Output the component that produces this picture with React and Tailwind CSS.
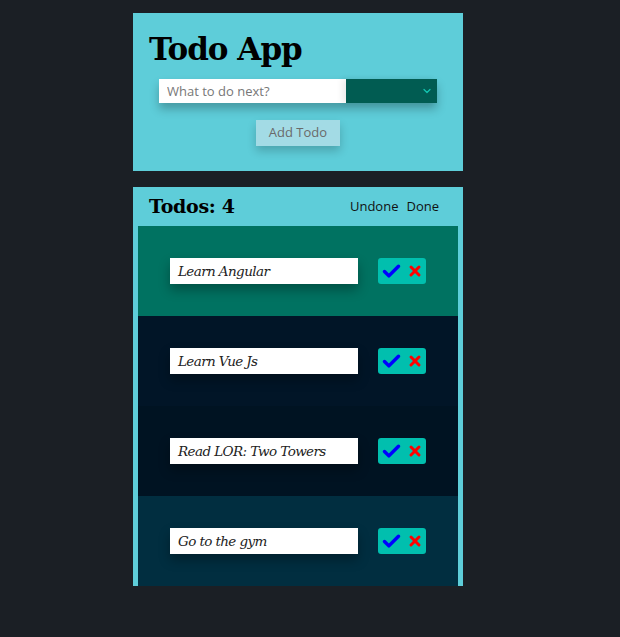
import { Check, X, ChevronDown } from 'lucide-react'

const todos = [
  { text: 'Learn Angular', bg: 'bg-[#007261]' },
  { text: 'Learn Vue Js', bg: 'bg-[#011527]' },
  { text: 'Read LOR: Two Towers', bg: 'bg-[#001322]' },
  { text: 'Go to the gym', bg: 'bg-[#012e40]' },
]

export default function App() {
  return (
    <div className="min-h-[637px] bg-[#1b1f25] flex flex-col items-center pt-[13px] pr-[24px]">
      {/* new todo card */}
      <div className="w-[330px] h-[158px] bg-[#5ecdd9] pt-[16px] px-4">
        <h1 className="text-[31px] leading-[40px] font-bold text-black font-['DejaVu_Serif',serif] tracking-[-1px]">
          Todo App
        </h1>
        <div className="mt-[10px] ml-[10px] flex w-[278px] h-[24px] shadow-[0_6px_10px_rgba(0,0,0,0.25)]">
          <input
            placeholder="What to do next?"
            className="w-[187px] h-full bg-white px-2 text-[13px] text-gray-700 placeholder:text-[#777] font-['Open_Sans',sans-serif] outline-none"
          />
          <div className="flex-1 bg-[#015c52] flex items-center justify-end pr-[4px] shadow-[-4px_0_6px_rgba(0,0,0,0.08)]">
            <ChevronDown size={12} strokeWidth={2.5} className="text-[#14c4b0]" />
          </div>
        </div>
        <div className="flex justify-center mt-[17px]">
          <button className="w-[84px] h-[26px] bg-[#a3dbe5] text-[#6a6a6a] text-[13px] font-['Open_Sans',sans-serif] shadow-[0_5px_10px_rgba(0,0,0,0.2)]">
            Add Todo
          </button>
        </div>
      </div>

      {/* list card */}
      <div className="mt-[16px] w-[330px] bg-[#5ecdd9] px-[5px]">
        <div className="h-[39px] flex items-center justify-between pl-[11px] pr-[19px]">
          <h2 className="text-[19px] font-bold text-black font-['DejaVu_Serif',serif] tracking-[-0.3px]">Todos: 4</h2>
          <div className="flex gap-[8px] text-[13px] text-[#111] font-['Open_Sans',sans-serif]">
            <span>Undone</span>
            <span>Done</span>
          </div>
        </div>
        <ul>
          {todos.map(t => (
            <li key={t.text} className={`${t.bg} h-[90px] flex items-center pl-[32px]`}>
              <div className="w-[188px] h-[26px] bg-white flex items-center px-2 shadow-[0_6px_12px_rgba(0,0,0,0.3)]">
                <span className="italic text-[13.5px] text-[#222] font-['DejaVu_Serif',serif] tracking-[-0.6px]">{t.text}</span>
              </div>
              <div className="ml-[20px] w-[48px] h-[26px] bg-[#01bfae] rounded-[3px] flex items-center justify-center gap-[5px]">
                <Check size={21} strokeWidth={4} className="text-[#0000ff]" />
                <X size={16} strokeWidth={4.5} className="text-[#ff0000]" />
              </div>
            </li>
          ))}
        </ul>
      </div>
    </div>
  )
}
